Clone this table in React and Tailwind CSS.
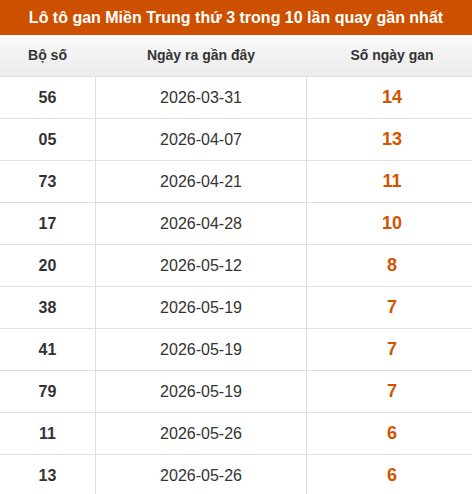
import React from 'react';

const rows = [
  { num: '56', date: '2026-03-31', gan: 14 },
  { num: '05', date: '2026-04-07', gan: 13 },
  { num: '73', date: '2026-04-21', gan: 11 },
  { num: '17', date: '2026-04-28', gan: 10 },
  { num: '20', date: '2026-05-12', gan: 8 },
  { num: '38', date: '2026-05-19', gan: 7 },
  { num: '41', date: '2026-05-19', gan: 7 },
  { num: '79', date: '2026-05-19', gan: 7 },
  { num: '11', date: '2026-05-26', gan: 6 },
  { num: '13', date: '2026-05-26', gan: 6 },
];

const App = () => {
  return (
    <div className="w-[472px] bg-white font-['Liberation_Sans',Arial,sans-serif] text-[#333]">
      <div className="h-[35px] bg-[#cc5000] flex items-center justify-center text-white text-[16px] font-bold">
        Lô tô gan Miền Trung thứ 3 trong 10 lần quay gần nhất
      </div>

      <div className="h-[42px] flex items-center bg-gradient-to-b from-[#f9f9f9] to-[#ebebeb] border-b border-[#e0e0e0] text-[14px] font-bold text-[#333]">
        <div className="w-[95px] text-center">Bộ số</div>
        <div className="w-[212px] text-center">Ngày ra gần đây</div>
        <div className="flex-1 text-center pl-[5px]">Số ngày gan</div>
      </div>

      {rows.map((row, i) => (
        <div key={i} className="h-[42px] flex border-b border-[#e0e0e0]">
          <div className="w-[96px] flex items-center justify-center text-[16px] font-bold border-r border-[#e0e0e0]">{row.num}</div>
          <div className="w-[211px] flex items-center justify-center text-[16px] border-r border-[#e0e0e0]">{row.date}</div>
          <div className="flex-1 flex items-center justify-center pl-[5px] text-[18px] font-bold text-[#d35400]">{row.gan}</div>
        </div>
      ))}
    </div>
  );
};

export default App;
